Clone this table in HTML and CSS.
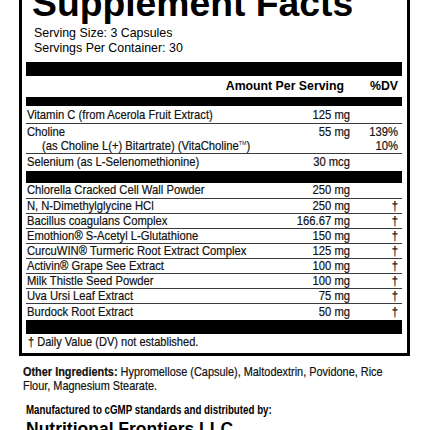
FILE: index.html
```html
<!DOCTYPE html>
<html>
<head>
<meta charset="utf-8">
<link rel="stylesheet" href="styles.css">
</head>
<body>
<div class="label">
  <h1 class="title">Supplement Facts</h1>
  <div class="serving">Serving Size: 3 Capsules<br>Servings Per Container: 30</div>
  <div class="bar bar-14"></div>
  <div class="head"><span class="h-amt">Amount Per Serving</span><span class="h-dv">%DV</span></div>
  <div class="bar bar-9"></div>
  <div class="row r-a"><span class="name">Vitamin C (from Acerola Fruit Extract)</span><span class="amt">125 mg</span><span class="dv"></span></div>
  <div class="row r-b">
    <span class="name">Choline</span><span class="amt">55 mg</span><span class="dv">139%</span>
    <span class="name sub">(as Choline L(+) Bitartrate) (VitaCholine<sup class="tm">TM</sup>)</span><span class="amt"></span><span class="dv">10%</span>
  </div>
  <div class="row r-c"><span class="name">Selenium (as L-Selenomethionine)</span><span class="amt">30 mcg</span><span class="dv"></span></div>
  <div class="bar bar-12"></div>
  <div class="row r-d"><span class="name">Chlorella Cracked Cell Wall Powder</span><span class="amt">250 mg</span><span class="dv"></span></div>
  <div class="row r-e"><span class="name">N, N-Dimethylglycine HCl</span><span class="amt">250 mg</span><span class="dv">†</span></div>
  <div class="row r-e"><span class="name">Bacillus coagulans Complex</span><span class="amt">166.67 mg</span><span class="dv">†</span></div>
  <div class="row r-e"><span class="name">Emothion® S-Acetyl L-Glutathione</span><span class="amt">150 mg</span><span class="dv">†</span></div>
  <div class="row r-e"><span class="name">CurcuWIN® Turmeric Root Extract Complex</span><span class="amt">125 mg</span><span class="dv">†</span></div>
  <div class="row r-e"><span class="name">Activin® Grape See Extract</span><span class="amt">100 mg</span><span class="dv">†</span></div>
  <div class="row r-e"><span class="name">Milk Thistle Seed Powder</span><span class="amt">100 mg</span><span class="dv">†</span></div>
  <div class="row r-e"><span class="name">Uva Ursi Leaf Extract</span><span class="amt">75 mg</span><span class="dv">†</span></div>
  <div class="row r-f"><span class="name">Burdock Root Extract</span><span class="amt">50 mg</span><span class="dv">†</span></div>
  <div class="bar bar-14"></div>
  <div class="foot"><span class="narrow">† Daily Value (DV) not established.</span></div>
</div>
<div class="other"><span class="narrow"><b>Other Ingredients:</b> Hypromellose (Capsule), Maltodextrin, Povidone, Rice<br>Flour, Magnesium Stearate.</span></div>
<div class="mfg"><span class="narrow">Manufactured to cGMP standards and distributed by:</span></div>
<div class="company">Nutritional Frontiers LLC</div>
</body>
</html>
```
FILE: styles.css
```css
html, body {
  margin: 0;
  padding: 0;
  background: #fff;
  color: #000;
}
body {
  width: 430px;
  height: 430px;
  overflow: hidden;
  font-family: "Liberation Sans", Arial, sans-serif;
}
.label {
  box-sizing: border-box;
  width: 391px;
  margin: -18px 0 0 19px;
  border: 3px solid #000;
  padding: 0 5px 0 4px;
}
.title {
  margin: 0;
  padding-left: 6px;
  font-size: 37.3px;
  line-height: 37px;
  font-weight: bold;
}
.serving {
  margin-top: 3.5px;
  padding-left: 8px;
  font-size: 12.4px;
  line-height: 15px;
}
.bar { background: #000; }
.serving + .bar { margin-top: 6.5px; }
.bar-14 { height: 14px; }
.bar-9 { height: 9px; }
.bar-12 { height: 12px; }
.head {
  display: flex;
  justify-content: flex-end;
  height: 21px;
  line-height: 21px;
  font-size: 12.3px;
  font-weight: bold;
  padding-right: 4px;
}
.h-amt { padding-right: 26px; }

.row {
  display: grid;
  grid-template-columns: minmax(0, 1fr) 90px 48px;
  padding-right: 4px;
  font-size: 12.7px;
  color: #111;
  -webkit-text-stroke: 0.2px #111;
  border-bottom: 1px solid #3a3a3a;
}
.name, .amt, .dv {
  white-space: nowrap;
  min-width: 0;
  transform: scaleX(0.886);
}
.name {
  padding-left: 1px;
  transform-origin: 0 50%;
}
.amt, .dv {
  text-align: right;
  transform-origin: 100% 50%;
}
.sub { padding-left: 18px; }
.tm { font-size: 6px; vertical-align: 5px; line-height: 0; -webkit-text-stroke: 0; }
.r-a { padding-top: 2px; line-height: 15px; }
.r-b { padding-top: 1px; line-height: 14px; }
.r-c { line-height: 17px; border-bottom: 0; }
.r-d { line-height: 15px; }
.r-e { line-height: 14px; }
.r-f { line-height: 16px; border-bottom: 0; }

.narrow {
  display: inline-block;
  white-space: nowrap;
  transform-origin: 0 50%;
}
.foot {
  font-size: 12.7px;
  line-height: 17px;
  padding: 0 0 2px 2px;
  color: #111;
  -webkit-text-stroke: 0.2px #111;
}
.foot .narrow { transform: scaleX(0.87); }
.other {
  margin: 9px 0 0 23px;
  font-size: 12.7px;
  line-height: 14px;
  color: #111;
  -webkit-text-stroke: 0.2px #111;
}
.other .narrow { transform: scaleX(0.86); }
.mfg {
  margin: 10px 0 0 26px;
  font-size: 12.2px;
  font-weight: bold;
  line-height: 14px;
}
.mfg .narrow { transform: scaleX(0.8); }
.company {
  margin: 2px 0 0 26px;
  font-size: 17.5px;
  font-weight: bold;
  line-height: 20px;
}
```
